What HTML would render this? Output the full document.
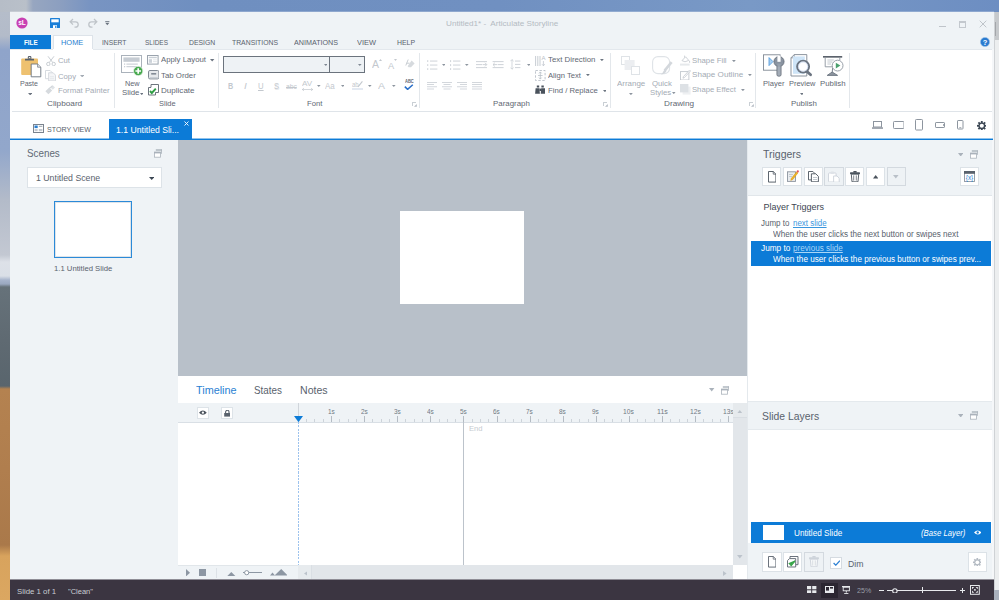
<!DOCTYPE html>
<html><head><meta charset="utf-8"><title>Untitled1* - Articulate Storyline</title>
<style>
*{box-sizing:border-box;margin:0;padding:0}
html,body{width:999px;height:600px;overflow:hidden;background:#7f9dc9;font-family:"Liberation Sans",sans-serif;}
#root{position:absolute;left:0;top:0;width:999px;height:600px;overflow:hidden}
.a{position:absolute}
.t{position:absolute;white-space:nowrap;line-height:1;transform-origin:0 50%}
#win{position:absolute;left:10px;top:12px;width:984px;height:588px;background:#fff;overflow:hidden}
u{text-decoration:underline;text-decoration-thickness:0.7px;text-underline-offset:1px}
</style></head><body>
<div id="root">
<div class="a" style="left:0;top:0;width:999px;height:13px;background:linear-gradient(90deg,#b6bdc7 0,#b9c0c9 26px,#97a6c0 33px,#8c9fc0 60px,#7894c2 90px,#6f8fc0 200px,#7090c1 500px,#7999c6 750px,#6d8ec2 999px)"></div>
<div class="a" style="left:10.00px;top:10.60px;width:984.00px;height:1.40px;background:rgba(255,255,255,0.22);"></div>
<div class="a" style="left:0;top:12px;width:11px;height:588px;background:linear-gradient(180deg,#b5bdca 0px,#b3bbc9 24px,#8fa4ca 38px,#92a7cb 138px,#b3bbc9 188px,#c3c8d2 243px,#dde1e8 250px,#dadfe7 264px,#a7b4cc 268px,#9aa8c0 272px,#66727a 275px,#5f6a72 328px,#59656d 374px,#b48250 377px,#b07e4e 458px,#aa794a 533px,#d8a35d 544px,#dba761 588px)"></div>
<div class="a" style="left:994.00px;top:11.50px;width:5.00px;height:588.50px;background:#eceeef;"></div>
<div class="a" style="left:994.00px;top:11.50px;width:5.00px;height:28.50px;background:#c6c9cc;"></div>
<div class="a" style="left:994.00px;top:22.00px;width:2.00px;height:14.00px;background:#a3a6aa;"></div>
<div class="a" style="left:994.00px;top:590.00px;width:5.00px;height:10.00px;background:#a9b1bd;"></div>
<div class="a" style="left:994.00px;top:11.50px;width:0.60px;height:578.50px;background:#cfd2d5;"></div>
<div id="win">
<div class="a" style="left:0.00px;top:0.00px;width:984.00px;height:37.60px;background:#eff3f6;"></div>
<svg class="a" style="left:6.00px;top:5.20px;" width="12" height="12" viewBox="0 0 12 12"><circle cx="6" cy="6" r="5.6" fill="#c840b3"/><text x="6" y="8.3" font-size="6.5" font-weight="700" fill="#fff" text-anchor="middle" font-family="Liberation Sans, sans-serif">sL</text></svg>
<svg class="a" style="left:40.00px;top:6.20px;" width="10" height="10" viewBox="0 0 10 10"><rect x="0" y="0" width="10" height="10" rx="0.6" fill="#1b7fd8"/><rect x="1.3" y="1.3" width="7.4" height="3" fill="#fff"/><rect x="3" y="7.2" width="4" height="2.8" fill="#fff"/><rect x="5.2" y="7.8" width="1.2" height="2.2" fill="#1b7fd8"/></svg>
<svg class="a" style="left:58.50px;top:5.60px;" width="11" height="10" viewBox="0 0 11 10"><path d="M4 1 L1.2 3.8 L4 6.6 M1.4 3.8 H6.5 A2.7 2.7 0 0 1 6.5 9.2 H5.5" fill="none" stroke="#bfc4c9" stroke-width="1.3"/></svg>
<svg class="a" style="left:77.00px;top:5.60px;" width="11" height="10" viewBox="0 0 11 10"><path d="M7 1 L9.8 3.8 L7 6.6 M9.6 3.8 H4.5 A2.7 2.7 0 0 0 4.5 9.2 H5.5" fill="none" stroke="#bfc4c9" stroke-width="1.3"/></svg>
<svg class="a" style="left:95.00px;top:9.00px;" width="5" height="5" viewBox="0 0 5 5"><rect x="0.2" y="0" width="4.2" height="0.8" fill="#6b7480"/><path d="M0.2 1.8h4.2L2.3 4.2z" fill="#6b7480"/></svg>
<span class="t" style="left:435.80px;top:7.74px;font-size:7.8px;color:#b4bbc3;transform:scaleX(1.0439);">Untitled1* -&nbsp; Articulate Storyline</span>
<div class="a" style="left:929.00px;top:14.00px;width:6.50px;height:1.00px;background:#bfc4ca;"></div>
<div class="a" style="left:949.00px;top:8.50px;width:7.00px;height:7.00px;border:1px solid #c3c8ce;border-top-width:2px;"></div>
<svg class="a" style="left:969.00px;top:8.00px;" width="8" height="8" viewBox="0 0 8 8"><path d="M0.7 0.7L7.3 7.3M7.3 0.7L0.7 7.3" stroke="#bfc4ca" stroke-width="1"/></svg>
<svg class="a" style="left:970.00px;top:24.50px;" width="10" height="10" viewBox="0 0 10 10"><circle cx="5" cy="5" r="4.6" fill="#2a7bd0"/><circle cx="5" cy="5" r="4.6" fill="none" stroke="#9cc3ea" stroke-width="0.6"/><text x="5" y="7.6" font-size="7.5" font-weight="700" fill="#fff" text-anchor="middle" font-family="Liberation Sans, sans-serif">?</text></svg>
<div class="a" style="left:0.00px;top:22.60px;width:40.80px;height:14.80px;background:#0c7bd7;"></div>
<span class="t" style="left:13.80px;top:26.64px;font-size:8px;color:#fff;font-weight:700;transform:scaleX(0.7841);">FILE</span>
<div class="a" style="left:42.60px;top:22.60px;width:40.00px;height:15.00px;background:#fff;border:1px solid #dde3e9;border-bottom:none;"></div>
<span class="t" style="left:51.00px;top:26.64px;font-size:8px;color:#2a7fd0;transform:scaleX(0.9292);">HOME</span>
<span class="t" style="left:91.90px;top:26.64px;font-size:8px;color:#59626d;transform:scaleX(0.8355);">INSERT</span>
<span class="t" style="left:135.00px;top:26.64px;font-size:8px;color:#59626d;transform:scaleX(0.8079);">SLIDES</span>
<span class="t" style="left:178.70px;top:26.64px;font-size:8px;color:#59626d;transform:scaleX(0.8542);">DESIGN</span>
<span class="t" style="left:222.00px;top:26.64px;font-size:8px;color:#59626d;transform:scaleX(0.8553);">TRANSITIONS</span>
<span class="t" style="left:284.00px;top:26.64px;font-size:8px;color:#59626d;transform:scaleX(0.8945);">ANIMATIONS</span>
<span class="t" style="left:347.00px;top:26.64px;font-size:8px;color:#59626d;transform:scaleX(0.9290);">VIEW</span>
<span class="t" style="left:387.00px;top:26.64px;font-size:8px;color:#59626d;transform:scaleX(0.8610);">HELP</span>
<div class="a" style="left:0.00px;top:37.40px;width:982.00px;height:61.60px;background:#fff;"></div>
<div class="a" style="left:982.00px;top:37.40px;width:2.00px;height:530.10px;background:#f5f7f9;"></div>
<div class="a" style="left:0.00px;top:36.80px;width:42.60px;height:0.80px;background:#e3e8ed;"></div>
<div class="a" style="left:82.60px;top:36.80px;width:899.40px;height:0.80px;background:#e3e8ed;"></div>
<div class="a" style="left:2.00px;top:99.00px;width:980.00px;height:1.00px;background:#dfe4e9;"></div>
<div class="a" style="left:104.00px;top:41.00px;width:1.00px;height:55.00px;background:#e3e7eb;"></div>
<div class="a" style="left:208.20px;top:41.00px;width:1.00px;height:55.00px;background:#e3e7eb;"></div>
<div class="a" style="left:408.80px;top:41.00px;width:1.00px;height:55.00px;background:#e3e7eb;"></div>
<div class="a" style="left:599.90px;top:41.00px;width:1.00px;height:55.00px;background:#e3e7eb;"></div>
<div class="a" style="left:745.10px;top:41.00px;width:1.00px;height:55.00px;background:#e3e7eb;"></div>
<div class="a" style="left:838.80px;top:41.00px;width:1.00px;height:55.00px;background:#e3e7eb;"></div>
<svg class="a" style="left:11.00px;top:43.60px;" width="21" height="22" viewBox="0 0 21 22"><rect x="0.2" y="2.4" width="16.8" height="16.5" rx="1" fill="#eec170"/><rect x="4" y="2.8" width="9" height="1.7" fill="#59626d"/><path d="M6.8 2.8V1.4a1.8 1.6 0 0 1 3.6 0V2.8z" fill="#59626d"/><rect x="7.9" y="1.1" width="1.4" height="1" fill="#fff"/><path d="M10.2 8h6.4l3.2 3.2v9.6h-9.6z" fill="#fff" stroke="#6b7480" stroke-width="0.9"/><path d="M16.6 8v3.2h3.2" fill="#dfe3e7" stroke="#6b7480" stroke-width="0.7"/></svg>
<span class="t" style="left:10.40px;top:67.84px;font-size:8px;color:#5f6873;transform:scaleX(0.8794);">Paste</span>
<svg class="a" style="left:17.60px;top:80.90px;" width="4.4" height="2.4" viewBox="0 0 4.4 2.4"><path d="M0 0h4.4L2.2 2.4z" fill="#6b7480"/></svg>
<svg class="a" style="left:35.60px;top:43.60px;" width="10" height="10" viewBox="0 0 10 10"><path d="M2 0.3L6.8 6.6M8 0.3L3.2 6.6" stroke="#c3c8ce" stroke-width="0.9" fill="none"/><circle cx="2.3" cy="8" r="1.7" fill="none" stroke="#c3c8ce" stroke-width="0.9"/><circle cx="7.7" cy="8" r="1.7" fill="none" stroke="#c3c8ce" stroke-width="0.9"/></svg>
<span class="t" style="left:48.00px;top:45.04px;font-size:8px;color:#a4abb4;transform:scaleX(0.9636);">Cut</span>
<svg class="a" style="left:35.20px;top:57.80px;" width="11" height="11.4" viewBox="0 0 11 11.4"><path d="M0.5 0.5h4.6l2.2 2.2v6h-6.8z" fill="#fff" stroke="#d3d7dc" stroke-width="0.9"/><path d="M3.6 2.8h4.6l2.3 2.3v5.8h-6.9z" fill="#f4f5f7" stroke="#d3d7dc" stroke-width="0.9"/><rect x="5" y="6.4" width="4" height="0.8" fill="#dfe3e7"/><rect x="5" y="8.4" width="4" height="0.8" fill="#dfe3e7"/></svg>
<span class="t" style="left:48.00px;top:60.54px;font-size:8px;color:#a4abb4;transform:scaleX(0.9632);">Copy</span>
<svg class="a" style="left:69.80px;top:62.80px;" width="4.4" height="2.4" viewBox="0 0 4.4 2.4"><path d="M0 0h4.4L2.2 2.4z" fill="#a4abb4"/></svg>
<svg class="a" style="left:35.40px;top:72.80px;" width="11" height="10" viewBox="0 0 11 10"><path d="M0.4 6.2L4.2 2.4l3 3L3.4 9.2z" fill="#d6dade"/><path d="M5.6 2.6L8 0.4l2 2L7.8 4.8z" fill="#dfe3e7"/><path d="M4.4 3.4L7.6 0.6" stroke="#d0d5da" stroke-width="1.2"/></svg>
<span class="t" style="left:48.00px;top:74.84px;font-size:8px;color:#a4abb4;transform:scaleX(0.9753);">Format Painter</span>
<span class="t" style="left:37.00px;top:87.84px;font-size:8px;color:#5f6873;transform:scaleX(1.0277);">Clipboard</span>
<svg class="a" style="left:110.60px;top:43.00px;" width="23" height="22" viewBox="0 0 23 22"><rect x="0.5" y="0.5" width="20" height="17" fill="#fff" stroke="#aab2bb" stroke-width="1"/><rect x="2.4" y="2.4" width="16.2" height="4.4" fill="#c6ccd3"/><rect x="5.4" y="8.6" width="11.4" height="1" fill="#c3c9d0"/><rect x="5.4" y="11.2" width="11.4" height="1" fill="#c3c9d0"/><rect x="3" y="8.5" width="1.2" height="1.2" fill="#c3c9d0"/><rect x="3" y="11.1" width="1.2" height="1.2" fill="#c3c9d0"/><circle cx="17.2" cy="16" r="4.7" fill="#48a94f" stroke="#e8f3e9" stroke-width="0.8"/><path d="M17.2 13.2v5.6M14.4 16h5.6" stroke="#fff" stroke-width="1.7"/></svg>
<span class="t" style="left:114.60px;top:67.84px;font-size:8px;color:#5f6873;transform:scaleX(0.9116);">New</span>
<span class="t" style="left:111.80px;top:77.04px;font-size:8px;color:#5f6873;transform:scaleX(0.9777);">Slide</span>
<svg class="a" style="left:129.80px;top:80.55px;" width="3.6" height="2.1" viewBox="0 0 3.6 2.1"><path d="M0 0h3.6L1.8 2.1z" fill="#6b7480"/></svg>
<svg class="a" style="left:137.40px;top:43.20px;" width="12" height="10" viewBox="0 0 12 10"><rect x="0.5" y="0.5" width="10.6" height="8.6" fill="#fff" stroke="#9aa3ad" stroke-width="1"/><rect x="1.8" y="1.8" width="8" height="1.4" fill="#c9cfd6"/><rect x="1.8" y="4.2" width="3.2" height="3.6" fill="#cdd3da"/><rect x="6" y="4.4" width="3.8" height="0.9" fill="#dfe3e7"/><rect x="6" y="6.2" width="3.8" height="0.9" fill="#dfe3e7"/></svg>
<span class="t" style="left:150.80px;top:44.44px;font-size:8px;color:#5f6873;transform:scaleX(0.9726);">Apply Layout</span>
<svg class="a" style="left:200.20px;top:47.20px;" width="4.4" height="2.4" viewBox="0 0 4.4 2.4"><path d="M0 0h4.4L2.2 2.4z" fill="#6b7480"/></svg>
<svg class="a" style="left:137.60px;top:58.20px;" width="11.6" height="9.6" viewBox="0 0 11.6 9.6"><rect x="0.5" y="0.5" width="10.4" height="8.4" rx="1.4" fill="#e6e9ec" stroke="#7f8893" stroke-width="1"/><rect x="1.6" y="7.2" width="8.2" height="1.2" fill="#c3c9d0"/><rect x="3.2" y="3.2" width="5" height="1.3" fill="#6b7480"/></svg>
<span class="t" style="left:150.80px;top:59.84px;font-size:8px;color:#5f6873;transform:scaleX(0.9781);">Tab Order</span>
<svg class="a" style="left:137.80px;top:72.40px;" width="11" height="11.5" viewBox="0 0 11 11.5"><path d="M0.5 3.5h7v7.5h-7z" fill="#fff" stroke="#5d6671" stroke-width="0.9"/><path d="M3 3.3V0.5h7.5v8H7.7" fill="#fff" stroke="#5d6671" stroke-width="0.9"/><path d="M2 7l1.8 2L7.8 4.6" fill="none" stroke="#2f9e44" stroke-width="1.9"/></svg>
<span class="t" style="left:150.80px;top:74.84px;font-size:8px;color:#5f6873;transform:scaleX(1.0072);">Duplicate</span>
<span class="t" style="left:148.80px;top:87.84px;font-size:8px;color:#5f6873;transform:scaleX(0.9327);">Slide</span>
<div class="a" style="left:213.10px;top:44.40px;width:107.20px;height:16.20px;background:#eef2f5;border:1px solid #6b737d;"></div>
<div class="a" style="left:319.30px;top:44.40px;width:35.50px;height:16.20px;background:#eef2f5;border:1px solid #6b737d;"></div>
<svg class="a" style="left:313.60px;top:51.60px;" width="3.6" height="2" viewBox="0 0 3.6 2"><path d="M0 0h3.6L1.8 2z" fill="#7f8893"/></svg>
<svg class="a" style="left:348.20px;top:51.60px;" width="3.6" height="2" viewBox="0 0 3.6 2"><path d="M0 0h3.6L1.8 2z" fill="#7f8893"/></svg>
<span class="t" style="left:362.40px;top:48.26px;font-size:10px;color:#c3c8ce;transform:scaleX(1.0492);">A</span>
<svg class="a" style="left:369.00px;top:46.60px;" width="3" height="2" viewBox="0 0 3 2"><path d="M0 2h3L1.5 0z" fill="#c3c8ce"/></svg>
<span class="t" style="left:378.40px;top:49.55px;font-size:8.6px;color:#c3c8ce;transform:scaleX(1.0812);">A</span>
<svg class="a" style="left:384.40px;top:47.40px;" width="3" height="2" viewBox="0 0 3 2"><path d="M0 0h3L1.5 2z" fill="#c3c8ce"/></svg>
<svg class="a" style="left:394.60px;top:47.40px;" width="10" height="10" viewBox="0 0 10 10"><path d="M3.2 0.5L0.8 6.5M1.6 4.2h3" stroke="#c3c8ce" stroke-width="0.9" fill="none"/><path d="M6.6 1.6l3 3-3.6 3.6h-2.4l-1-1z" fill="#d6dade"/></svg>
<span class="t" style="left:217.60px;top:69.75px;font-size:9px;color:#c3c8ce;font-weight:700;transform:scaleX(0.8000);">B</span>
<span class="t" style="left:234.00px;top:69.75px;font-size:9px;color:#c3c8ce;font-style:italic;transform:scaleX(1.1130);font-family:"Liberation Serif",serif;">I</span>
<span class="t" style="left:248.40px;top:69.75px;font-size:9px;color:#c3c8ce;transform:scaleX(0.8615);"><u>U</u></span>
<span class="t" style="left:264.20px;top:69.75px;font-size:9px;color:#c3c8ce;transform:scaleX(0.8312);text-shadow:0.6px 0.6px 0 #e3e6ea;">S</span>
<span class="t" style="left:276.40px;top:71.13px;font-size:7px;color:#c3c8ce;transform:scaleX(0.9560);"><s>abc</s></span>
<span class="t" style="left:292.40px;top:68.49px;font-size:7.5px;color:#c3c8ce;transform:scaleX(1.0790);">AV</span>
<svg class="a" style="left:292.00px;top:75.60px;" width="11" height="3" viewBox="0 0 11 3"><path d="M0 1.5h11M2 0L0.3 1.5L2 3M9 0l1.7 1.5L9 3" fill="none" stroke="#c3c8ce" stroke-width="0.7"/></svg>
<svg class="a" style="left:307.40px;top:72.60px;" width="3.6" height="2" viewBox="0 0 3.6 2"><path d="M0 0h3.6L1.8 2z" fill="#8d959f"/></svg>
<span class="t" style="left:315.20px;top:70.00px;font-size:8.5px;color:#c3c8ce;transform:scaleX(0.9417);">Aa</span>
<svg class="a" style="left:330.60px;top:72.60px;" width="3.6" height="2" viewBox="0 0 3.6 2"><path d="M0 0h3.6L1.8 2z" fill="#8d959f"/></svg>
<span class="t" style="left:342.00px;top:68.73px;font-size:7px;color:#c3c8ce;transform:scaleX(0.8465);">ab</span>
<svg class="a" style="left:346.40px;top:68.60px;" width="7" height="7" viewBox="0 0 7 7"><path d="M6.4 0.4L2 5.8" stroke="#c3c8ce" stroke-width="1.1"/></svg>
<div class="a" style="left:342.00px;top:76.40px;width:11.00px;height:2.00px;background:#e3e9f2;"></div>
<svg class="a" style="left:358.20px;top:72.60px;" width="3.6" height="2" viewBox="0 0 3.6 2"><path d="M0 0h3.6L1.8 2z" fill="#8d959f"/></svg>
<span class="t" style="left:368.00px;top:69.16px;font-size:9.8px;color:#c3c8ce;transform:scaleX(1.0692);">A</span>
<svg class="a" style="left:382.20px;top:72.60px;" width="3.6" height="2" viewBox="0 0 3.6 2"><path d="M0 0h3.6L1.8 2z" fill="#8d959f"/></svg>
<span class="t" style="left:394.60px;top:67.90px;font-size:4.6px;color:#5d6671;font-weight:700;transform:scaleX(0.8841);">ABC</span>
<svg class="a" style="left:394.20px;top:71.60px;" width="9.6" height="6.6" viewBox="0 0 9.6 6.6"><path d="M0.8 2.6L3.6 5.4L8.8 0.8" fill="none" stroke="#2a6fc9" stroke-width="1.5"/></svg>
<span class="t" style="left:297.00px;top:87.84px;font-size:8px;color:#5f6873;transform:scaleX(0.9616);">Font</span>
<svg class="a" style="left:402.00px;top:90.40px;" width="5" height="5" viewBox="0 0 5 5"><path d="M0.4 4V0.4H4" fill="none" stroke="#b4bbc3" stroke-width="0.8"/><path d="M2 4.8H4.8V2z" fill="#b4bbc3"/></svg>
<svg class="a" style="left:417.00px;top:47.60px;" width="10.6" height="10.4" viewBox="0 0 10.6 10.4"><rect x="0" y="0.4" width="1.3" height="1.3" fill="#c9ced4"/><rect x="3" y="0.6" width="7.4" height="0.9" fill="#c9ced4"/><rect x="0" y="4.4" width="1.3" height="1.3" fill="#c9ced4"/><rect x="3" y="4.6" width="7.4" height="0.9" fill="#c9ced4"/><rect x="0" y="8.4" width="1.3" height="1.3" fill="#c9ced4"/><rect x="3" y="8.6" width="7.4" height="0.9" fill="#c9ced4"/></svg>
<svg class="a" style="left:431.80px;top:51.80px;" width="3.6" height="2" viewBox="0 0 3.6 2"><path d="M0 0h3.6L1.8 2z" fill="#8d959f"/></svg>
<svg class="a" style="left:440.40px;top:47.60px;" width="10.6" height="10.4" viewBox="0 0 10.6 10.4"><rect x="0.2" y="0.1" width="0.9" height="2" fill="#c9ced4"/><rect x="3" y="0.6" width="7.4" height="0.9" fill="#c9ced4"/><rect x="0.2" y="4.1" width="0.9" height="2" fill="#c9ced4"/><rect x="3" y="4.6" width="7.4" height="0.9" fill="#c9ced4"/><rect x="0.2" y="8.1" width="0.9" height="2" fill="#c9ced4"/><rect x="3" y="8.6" width="7.4" height="0.9" fill="#c9ced4"/></svg>
<svg class="a" style="left:455.20px;top:51.80px;" width="3.6" height="2" viewBox="0 0 3.6 2"><path d="M0 0h3.6L1.8 2z" fill="#8d959f"/></svg>
<svg class="a" style="left:466.40px;top:48.60px;" width="11.6" height="8" viewBox="0 0 11.6 8"><rect x="0" y="0.2" width="11" height="0.9" fill="#c9ced4"/><rect x="0" y="3.2" width="6" height="0.9" fill="#c9ced4"/><rect x="0" y="6.2" width="11" height="0.9" fill="#c9ced4"/><path d="M6.6 3.6h4M9 1.8l1.8 1.8L9 5.4" fill="none" stroke="#c9ced4" stroke-width="0.9"/></svg>
<svg class="a" style="left:482.00px;top:48.60px;" width="11.6" height="8" viewBox="0 0 11.6 8"><rect x="0.6" y="0.2" width="11" height="0.9" fill="#c9ced4"/><rect x="5.6" y="3.2" width="6" height="0.9" fill="#c9ced4"/><rect x="0.6" y="6.2" width="11" height="0.9" fill="#c9ced4"/><path d="M1 3.6h4M2.8 1.8L1 3.6l1.8 1.8" fill="none" stroke="#c9ced4" stroke-width="0.9"/></svg>
<svg class="a" style="left:500.40px;top:47.40px;" width="10.6" height="10.8" viewBox="0 0 10.6 10.8"><path d="M2 0.6v9.6M0.4 2.2L2 0.6l1.6 1.6M0.4 8.6L2 10.2l1.6-1.6" fill="none" stroke="#c9ced4" stroke-width="0.8"/><rect x="5" y="1.6" width="5.4" height="0.9" fill="#c9ced4"/><rect x="5" y="4.9" width="5.4" height="0.9" fill="#c9ced4"/><rect x="5" y="8.2" width="5.4" height="0.9" fill="#c9ced4"/></svg>
<svg class="a" style="left:516.60px;top:51.80px;" width="3.6" height="2" viewBox="0 0 3.6 2"><path d="M0 0h3.6L1.8 2z" fill="#8d959f"/></svg>
<svg class="a" style="left:417.00px;top:69.60px;" width="10" height="8.8" viewBox="0 0 10 8.8"><rect x="0" y="0.0" width="10" height="0.8" fill="#c9ced4"/><rect x="0" y="2.2" width="7" height="0.8" fill="#c9ced4"/><rect x="0" y="4.4" width="10" height="0.8" fill="#c9ced4"/><rect x="0" y="6.6000000000000005" width="7" height="0.8" fill="#c9ced4"/></svg>
<svg class="a" style="left:432.00px;top:69.60px;" width="10" height="8.8" viewBox="0 0 10 8.8"><rect x="0.0" y="0.0" width="10" height="0.8" fill="#c9ced4"/><rect x="1.5" y="2.2" width="7" height="0.8" fill="#c9ced4"/><rect x="0.0" y="4.4" width="10" height="0.8" fill="#c9ced4"/><rect x="1.5" y="6.6000000000000005" width="7" height="0.8" fill="#c9ced4"/></svg>
<svg class="a" style="left:447.00px;top:69.60px;" width="10" height="8.8" viewBox="0 0 10 8.8"><rect x="0" y="0.0" width="10" height="0.8" fill="#c9ced4"/><rect x="3" y="2.2" width="7" height="0.8" fill="#c9ced4"/><rect x="0" y="4.4" width="10" height="0.8" fill="#c9ced4"/><rect x="3" y="6.6000000000000005" width="7" height="0.8" fill="#c9ced4"/></svg>
<svg class="a" style="left:462.00px;top:69.60px;" width="10" height="8.8" viewBox="0 0 10 8.8"><rect x="0" y="0.0" width="10" height="0.8" fill="#c9ced4"/><rect x="0" y="2.2" width="10" height="0.8" fill="#c9ced4"/><rect x="0" y="4.4" width="10" height="0.8" fill="#c9ced4"/><rect x="0" y="6.6000000000000005" width="10" height="0.8" fill="#c9ced4"/></svg>
<svg class="a" style="left:525.00px;top:42.60px;" width="11" height="11.4" viewBox="0 0 11 11.4"><path d="M0.6 1v10M2.8 1v10M5 1v10" stroke="#b9c0c8" stroke-width="0.8"/><text x="8.4" y="5" font-size="6" fill="#b9c0c8" text-anchor="middle" font-family="Liberation Sans, sans-serif">A</text><path d="M8.4 6v4.6M7 9.2l1.4 1.6 1.4-1.6" fill="none" stroke="#b9c0c8" stroke-width="0.7"/></svg>
<span class="t" style="left:538.20px;top:44.44px;font-size:8px;color:#5f6873;transform:scaleX(0.9779);">Text Direction</span>
<svg class="a" style="left:590.30px;top:47.10px;" width="3.8" height="2.2" viewBox="0 0 3.8 2.2"><path d="M0 0h3.8L1.9 2.2z" fill="#6b7480"/></svg>
<svg class="a" style="left:525.00px;top:57.60px;" width="10.6" height="11" viewBox="0 0 10.6 11"><rect x="0.5" y="0.5" width="9.6" height="10" fill="none" stroke="#b9c0c8" stroke-width="0.9" stroke-dasharray="2.4 1.6"/><path d="M5.3 2v7M4 3.4l1.3-1.5 1.3 1.5M4 7.6l1.3 1.5 1.3-1.5" fill="none" stroke="#b9c0c8" stroke-width="0.8"/><rect x="3" y="5.1" width="4.6" height="0.8" fill="#b9c0c8"/></svg>
<span class="t" style="left:538.20px;top:59.64px;font-size:8px;color:#5f6873;transform:scaleX(0.9552);">Align Text</span>
<svg class="a" style="left:576.10px;top:62.30px;" width="3.8" height="2.2" viewBox="0 0 3.8 2.2"><path d="M0 0h3.8L1.9 2.2z" fill="#6b7480"/></svg>
<svg class="a" style="left:524.60px;top:73.40px;" width="10.6" height="9" viewBox="0 0 10.6 9"><path d="M1.8 2.6h2.4v-2h-2.4z M6.4 2.6h2.4v-2h-2.4z" fill="#4a525c"/><path d="M0.6 3.2h3.8l0.5 5.6h-4.8z M6.2 3.2h3.8l0.5 5.6h-4.8z" fill="#4a525c"/><rect x="4.4" y="3.6" width="1.8" height="2.4" fill="#4a525c"/></svg>
<span class="t" style="left:538.20px;top:74.84px;font-size:8px;color:#5f6873;transform:scaleX(0.9652);">Find / Replace</span>
<svg class="a" style="left:592.50px;top:77.50px;" width="3.8" height="2.2" viewBox="0 0 3.8 2.2"><path d="M0 0h3.8L1.9 2.2z" fill="#6b7480"/></svg>
<span class="t" style="left:482.60px;top:87.84px;font-size:8px;color:#5f6873;transform:scaleX(0.9850);">Paragraph</span>
<svg class="a" style="left:593.00px;top:90.40px;" width="5" height="5" viewBox="0 0 5 5"><path d="M0.4 4V0.4H4" fill="none" stroke="#b4bbc3" stroke-width="0.8"/><path d="M2 4.8H4.8V2z" fill="#b4bbc3"/></svg>
<svg class="a" style="left:611.00px;top:44.00px;" width="20" height="20" viewBox="0 0 20 20"><rect x="0.5" y="0.5" width="8" height="8" fill="#fff" stroke="#dfe3e7" stroke-width="1"/><rect x="3.6" y="4" width="10" height="10" fill="#eceef1"/><rect x="10.5" y="10.5" width="8" height="8" fill="#fff" stroke="#dfe3e7" stroke-width="1"/></svg>
<span class="t" style="left:607.00px;top:67.84px;font-size:8px;color:#a4abb4;transform:scaleX(0.9906);">Arrange</span>
<svg class="a" style="left:619.10px;top:80.90px;" width="3.8" height="2.2" viewBox="0 0 3.8 2.2"><path d="M0 0h3.8L1.9 2.2z" fill="#8d959f"/></svg>
<svg class="a" style="left:642.00px;top:43.60px;" width="21" height="21" viewBox="0 0 21 21"><rect x="0.6" y="0.6" width="17" height="17" rx="5.4" fill="#fff" stroke="#dfe3e7" stroke-width="1.1"/><path d="M19.6 6.2L12.6 14.6" stroke="#d3d7dc" stroke-width="2.6"/><path d="M12.8 13.4l1.8 1.4c-1.2 2.6-3.4 3.6-5.6 3.6c1.8-1 2-3.6 3.8-5z" fill="#d3d7dc"/></svg>
<span class="t" style="left:642.20px;top:67.84px;font-size:8px;color:#a4abb4;transform:scaleX(0.9681);">Quick</span>
<span class="t" style="left:640.20px;top:77.04px;font-size:8px;color:#a4abb4;transform:scaleX(0.9726);">Styles</span>
<svg class="a" style="left:662.20px;top:80.35px;" width="3.6" height="2.1" viewBox="0 0 3.6 2.1"><path d="M0 0h3.6L1.8 2.1z" fill="#8d959f"/></svg>
<svg class="a" style="left:669.60px;top:42.60px;" width="11.6" height="11" viewBox="0 0 11.6 11"><path d="M2 5.6l3.6-3.8 3.2 3.6-3.8 1.4z" fill="#fff" stroke="#c3c8ce" stroke-width="0.8"/><path d="M4.6 2.6V0.6" stroke="#c3c8ce" stroke-width="0.8"/><path d="M9.6 5.6q1.4 1.6 0 2.4q-1.2-0.8 0-2.4z" fill="#c3c8ce"/><rect x="0" y="8.6" width="9.6" height="2" fill="#e6e9ec"/></svg>
<span class="t" style="left:682.20px;top:45.24px;font-size:8px;color:#a4abb4;transform:scaleX(0.9725);">Shape Fill</span>
<svg class="a" style="left:721.90px;top:47.70px;" width="3.8" height="2.2" viewBox="0 0 3.8 2.2"><path d="M0 0h3.8L1.9 2.2z" fill="#8d959f"/></svg>
<svg class="a" style="left:669.60px;top:57.60px;" width="11.6" height="10.6" viewBox="0 0 11.6 10.6"><rect x="0.5" y="1.6" width="8.4" height="8.4" fill="#fff" stroke="#c3c8ce" stroke-width="0.9"/><path d="M10.6 0.8L4.4 7.6l-1.4 0.6 0.4-1.6L9.6 0z" fill="#fff" stroke="#c3c8ce" stroke-width="0.8"/></svg>
<span class="t" style="left:682.20px;top:59.44px;font-size:8px;color:#a4abb4;transform:scaleX(1.0098);">Shape Outline</span>
<svg class="a" style="left:738.30px;top:62.10px;" width="3.8" height="2.2" viewBox="0 0 3.8 2.2"><path d="M0 0h3.8L1.9 2.2z" fill="#8d959f"/></svg>
<svg class="a" style="left:669.60px;top:72.00px;" width="11" height="10.6" viewBox="0 0 11 10.6"><rect x="2.6" y="2.6" width="8" height="8" fill="#eef0f2"/><rect x="0" y="0" width="8.4" height="8.4" fill="#dde1e5"/></svg>
<span class="t" style="left:682.20px;top:74.24px;font-size:8px;color:#a4abb4;transform:scaleX(0.9590);">Shape Effect</span>
<svg class="a" style="left:731.10px;top:76.90px;" width="3.8" height="2.2" viewBox="0 0 3.8 2.2"><path d="M0 0h3.8L1.9 2.2z" fill="#8d959f"/></svg>
<span class="t" style="left:654.20px;top:87.84px;font-size:8px;color:#5f6873;transform:scaleX(1.0224);">Drawing</span>
<svg class="a" style="left:738.60px;top:90.40px;" width="5" height="5" viewBox="0 0 5 5"><path d="M0.4 4V0.4H4" fill="none" stroke="#b4bbc3" stroke-width="0.8"/><path d="M2 4.8H4.8V2z" fill="#b4bbc3"/></svg>
<svg class="a" style="left:753.00px;top:42.00px;" width="22" height="23" viewBox="0 0 22 23"><rect x="0.5" y="0.8" width="16.6" height="15.4" fill="#fff" stroke="#7f8893" stroke-width="0.9"/><path d="M6 3.6v8l4-4z" fill="#a9d0f0" stroke="#4a96dc" stroke-width="0.8"/><circle cx="16" cy="7.6" r="5.1" fill="#8993a0" stroke="#59626d" stroke-width="0.7"/><rect x="14.4" y="1.8" width="3.2" height="6" fill="#fff"/><rect x="13.9" y="11.4" width="4.2" height="10.8" rx="1.6" fill="#a3acb7" stroke="#59626d" stroke-width="0.7"/><rect x="14.3" y="9.6" width="3.4" height="3" fill="#97a1ad"/></svg>
<span class="t" style="left:753.20px;top:67.84px;font-size:8px;color:#5f6873;transform:scaleX(0.9433);">Player</span>
<svg class="a" style="left:780.00px;top:42.00px;" width="23" height="23" viewBox="0 0 23 23"><path d="M4.2 0.6h12.6v21.4h-15.8v-18.2z" fill="#fff" stroke="#7f8893" stroke-width="0.9"/><path d="M1 3.8h3.2v-3.2" fill="none" stroke="#7f8893" stroke-width="0.8"/><rect x="3" y="2.4" width="11.8" height="17.4" fill="#cfe5f8"/><path d="M17 17.4l3.6 3.4" stroke="#6b7480" stroke-width="2.8" stroke-linecap="round"/><circle cx="13.1" cy="12.6" r="6" fill="#fff" stroke="#6b7480" stroke-width="1.9"/><circle cx="13.1" cy="12.6" r="4.7" fill="none" stroke="#b5c8e6" stroke-width="0.6"/></svg>
<span class="t" style="left:779.40px;top:67.84px;font-size:8px;color:#5f6873;transform:scaleX(0.9278);">Preview</span>
<svg class="a" style="left:789.70px;top:80.90px;" width="3.8" height="2.2" viewBox="0 0 3.8 2.2"><path d="M0 0h3.8L1.9 2.2z" fill="#6b7480"/></svg>
<svg class="a" style="left:812.00px;top:43.00px;" width="23" height="22" viewBox="0 0 23 22"><rect x="1" y="1.1" width="19.2" height="1.5" fill="#4a525c"/><path d="M3.2 2.6v9.2h7M17.8 2.6v2.6" fill="none" stroke="#8d959f" stroke-width="0.9"/><rect x="5.4" y="4.6" width="6.4" height="0.8" fill="#b4bbc3"/><rect x="5.4" y="6.6" width="5" height="0.8" fill="#b4bbc3"/><rect x="5.4" y="8.6" width="3.6" height="0.8" fill="#b4bbc3"/><path d="M10.6 13l-0.4 4.6M5.2 20.4l5-3.4 5.4 3.4z" stroke="#6b7480" stroke-width="0.9" fill="#8d959f"/><circle cx="15.6" cy="10.6" r="5.4" fill="#fff" stroke="#8d959f" stroke-width="0.9"/><path d="M13.8 7.8v5.6l4.6-2.8z" fill="#4aa06e"/></svg>
<span class="t" style="left:810.40px;top:67.84px;font-size:8px;color:#5f6873;transform:scaleX(0.9752);">Publish</span>
<span class="t" style="left:781.20px;top:87.84px;font-size:8px;color:#5f6873;transform:scaleX(0.9829);">Publish</span>
<div class="a" style="left:0.00px;top:100.00px;width:982.00px;height:26.00px;background:#fff;"></div>
<div class="a" style="left:0.00px;top:127.00px;width:983.40px;height:1.00px;background:#0c7bd7;"></div>
<div class="a" style="left:0.00px;top:126.00px;width:983.40px;height:1.00px;background:#8fc2ec;"></div>
<div class="a" style="left:99.00px;top:107.00px;width:82.60px;height:20.00px;background:#0c7bd7;"></div>
<span class="t" style="left:37.00px;top:113.84px;font-size:8px;color:#555e69;transform:scaleX(0.8836);">STORY VIEW</span>
<span class="t" style="left:106.00px;top:113.55px;font-size:9px;color:#fff;transform:scaleX(0.9614);">1.1 Untitled Sli...</span>
<svg class="a" style="left:173.50px;top:108.50px;" width="5" height="5" viewBox="0 0 5 5"><path d="M0.5 0.5L4.5 4.5M4.5 0.5L0.5 4.5" stroke="#fff" stroke-width="0.9"/></svg>
<svg class="a" style="left:23.00px;top:112.00px;" width="11" height="9" viewBox="0 0 11 9"><rect x="0.5" y="0.5" width="10" height="8" fill="#fff" stroke="#7a838e" stroke-width="1"/><rect x="1.5" y="1.5" width="3.2" height="2.6" fill="#2a7fd0"/><rect x="5.8" y="1.8" width="3.6" height="1" fill="#9aa3ad"/><rect x="1.6" y="5" width="3" height="2.2" fill="#c3c9d0"/><rect x="5.8" y="5" width="3.6" height="2.2" fill="#c3c9d0"/></svg>
<svg class="a" style="left:862.00px;top:109.00px;" width="11" height="8" viewBox="0 0 11 8"><rect x="1.5" y="0.5" width="8" height="5.5" fill="#fff" stroke="#8d959f" stroke-width="1"/><rect x="0" y="6.3" width="11" height="1.5" fill="#8d959f"/></svg>
<svg class="a" style="left:882.50px;top:109.00px;" width="11.5" height="8" viewBox="0 0 11.5 8"><rect x="0.5" y="0.5" width="10.5" height="7" rx="0.8" fill="#fff" stroke="#8d959f" stroke-width="1"/></svg>
<svg class="a" style="left:905.00px;top:107.00px;" width="8" height="11.5" viewBox="0 0 8 11.5"><rect x="0.5" y="0.5" width="7" height="10.5" rx="0.8" fill="#fff" stroke="#8d959f" stroke-width="1"/></svg>
<svg class="a" style="left:924.80px;top:110.00px;" width="10" height="6" viewBox="0 0 10 6"><rect x="0.5" y="0.5" width="9" height="5" rx="0.6" fill="#fff" stroke="#8d959f" stroke-width="1"/><rect x="8" y="2" width="0.8" height="2" fill="#8d959f"/></svg>
<svg class="a" style="left:947.00px;top:108.00px;" width="6.5" height="9.5" viewBox="0 0 6.5 9.5"><rect x="0.5" y="0.5" width="5.5" height="8.5" rx="0.6" fill="#fff" stroke="#8d959f" stroke-width="1"/><rect x="2.3" y="7.3" width="2" height="0.8" fill="#8d959f"/></svg>
<svg class="a" style="left:966.80px;top:108.80px;" width="9.6" height="9.6" viewBox="0 0 10 10"><g transform="translate(5 5)"><rect x="-0.95" y="-5" width="1.9" height="10" fill="#3b4653" transform="rotate(0)"/><rect x="-0.95" y="-5" width="1.9" height="10" fill="#3b4653" transform="rotate(45)"/><rect x="-0.95" y="-5" width="1.9" height="10" fill="#3b4653" transform="rotate(90)"/><rect x="-0.95" y="-5" width="1.9" height="10" fill="#3b4653" transform="rotate(135)"/><circle r="3.5" fill="#3b4653"/><circle r="2.15" fill="#fff"/></g></svg>
<div class="a" style="left:0.00px;top:128.00px;width:167.50px;height:439.50px;background:#eff3f6;"></div>
<span class="t" style="left:16.50px;top:136.38px;font-size:11px;color:#606974;transform:scaleX(0.8937);">Scenes</span>
<svg class="a" style="left:144.20px;top:137.30px;" width="8" height="9" viewBox="0 0 8 9"><rect x="1.8" y="0.3" width="6" height="1.4" fill="#aab2bb"/><rect x="7" y="0.3" width="0.8" height="4.5" fill="#aab2bb"/><rect x="0.4" y="3.2" width="6" height="5" fill="#fff" stroke="#aab2bb" stroke-width="0.8"/><rect x="0" y="2.8" width="6.8" height="1.6" fill="#aab2bb"/></svg>
<div class="a" style="left:16.50px;top:155.20px;width:135.30px;height:20.40px;background:#fff;border:1px solid #dde3e8;"></div>
<span class="t" style="left:25.80px;top:161.95px;font-size:9px;color:#59626d;transform:scaleX(0.9720);">1 Untitled Scene</span>
<svg class="a" style="left:138.60px;top:164.60px;" width="5.4" height="3" viewBox="0 0 5.4 3"><path d="M0 0h5.4L2.7 3z" fill="#3b4653"/></svg>
<div class="a" style="left:44.00px;top:188.80px;width:78.30px;height:57.20px;background:#fff;border:1px solid #2b8ad8;box-shadow:inset 0 0 0 1px #dfe4e9;"></div>
<span class="t" style="left:43.80px;top:253.04px;font-size:8px;color:#59626d;transform:scaleX(0.9622);">1.1 Untitled Slide</span>
<div class="a" style="left:167.50px;top:128.00px;width:569.80px;height:235.60px;background:#b8c0c9;"></div>
<div class="a" style="left:390.00px;top:198.80px;width:124.40px;height:93.20px;background:#fff;"></div>
<div class="a" style="left:167.50px;top:363.60px;width:569.80px;height:203.90px;background:#fff;"></div>
<span class="t" style="left:186.10px;top:372.88px;font-size:11px;color:#2a7fd3;transform:scaleX(0.9861);">Timeline</span>
<span class="t" style="left:244.10px;top:372.88px;font-size:11px;color:#59626d;transform:scaleX(0.8946);">States</span>
<span class="t" style="left:289.70px;top:372.88px;font-size:11px;color:#59626d;transform:scaleX(0.9600);">Notes</span>
<svg class="a" style="left:699.40px;top:376.00px;" width="5.4" height="3.6" viewBox="0 0 5.4 3.6"><path d="M0 0h5.4L2.7 3.6z" fill="#aab2bb"/></svg>
<svg class="a" style="left:711.30px;top:373.60px;" width="8" height="9" viewBox="0 0 8 9"><rect x="1.8" y="0.3" width="6" height="1.4" fill="#aab2bb"/><rect x="7" y="0.3" width="0.8" height="4.5" fill="#aab2bb"/><rect x="0.4" y="3.2" width="6" height="5" fill="#fff" stroke="#aab2bb" stroke-width="0.8"/><rect x="0" y="2.8" width="6.8" height="1.6" fill="#aab2bb"/></svg>
<div class="a" style="left:167.50px;top:391.00px;width:555.80px;height:20.00px;background:#eff3f6;border-bottom:1px solid #d9dfe5;"></div>
<div class="a" style="left:186.50px;top:395.30px;width:12.20px;height:12.10px;background:#fff;border:1px solid #dde3e8;"></div>
<svg class="a" style="left:188.80px;top:398.40px;" width="7.8" height="5.4" viewBox="0 0 7.8 5.4"><path d="M0 2.7Q3.9 -1.6 7.8 2.7Q3.9 7 0 2.7z" fill="#4a525c"/><circle cx="3.9" cy="2.7" r="1.15" fill="#fff"/></svg>
<div class="a" style="left:211.00px;top:395.30px;width:12.00px;height:12.10px;background:#fff;border:1px solid #dde3e8;"></div>
<svg class="a" style="left:213.80px;top:397.80px;" width="6.6" height="7" viewBox="0 0 6.6 7"><path d="M1.6 3V2a1.7 1.7 0 0 1 3.4 0V3" fill="none" stroke="#59626d" stroke-width="1.1"/><rect x="0.2" y="3" width="6.2" height="3.6" fill="#59626d"/></svg>
<div class="a" style="left:296.17px;top:407.00px;width:1.00px;height:3.00px;background:#cdd3d9;"></div>
<div class="a" style="left:304.45px;top:407.00px;width:1.00px;height:3.00px;background:#cdd3d9;"></div>
<div class="a" style="left:312.72px;top:407.00px;width:1.00px;height:3.00px;background:#cdd3d9;"></div>
<div class="a" style="left:321.00px;top:404.40px;width:1.00px;height:5.60px;background:#b4bbc3;"></div>
<div class="a" style="left:329.27px;top:407.00px;width:1.00px;height:3.00px;background:#cdd3d9;"></div>
<div class="a" style="left:337.55px;top:407.00px;width:1.00px;height:3.00px;background:#cdd3d9;"></div>
<div class="a" style="left:345.82px;top:407.00px;width:1.00px;height:3.00px;background:#cdd3d9;"></div>
<div class="a" style="left:354.10px;top:404.40px;width:1.00px;height:5.60px;background:#b4bbc3;"></div>
<div class="a" style="left:362.38px;top:407.00px;width:1.00px;height:3.00px;background:#cdd3d9;"></div>
<div class="a" style="left:370.65px;top:407.00px;width:1.00px;height:3.00px;background:#cdd3d9;"></div>
<div class="a" style="left:378.92px;top:407.00px;width:1.00px;height:3.00px;background:#cdd3d9;"></div>
<div class="a" style="left:387.20px;top:404.40px;width:1.00px;height:5.60px;background:#b4bbc3;"></div>
<div class="a" style="left:395.47px;top:407.00px;width:1.00px;height:3.00px;background:#cdd3d9;"></div>
<div class="a" style="left:403.75px;top:407.00px;width:1.00px;height:3.00px;background:#cdd3d9;"></div>
<div class="a" style="left:412.02px;top:407.00px;width:1.00px;height:3.00px;background:#cdd3d9;"></div>
<div class="a" style="left:420.30px;top:404.40px;width:1.00px;height:5.60px;background:#b4bbc3;"></div>
<div class="a" style="left:428.57px;top:407.00px;width:1.00px;height:3.00px;background:#cdd3d9;"></div>
<div class="a" style="left:436.85px;top:407.00px;width:1.00px;height:3.00px;background:#cdd3d9;"></div>
<div class="a" style="left:445.12px;top:407.00px;width:1.00px;height:3.00px;background:#cdd3d9;"></div>
<div class="a" style="left:453.40px;top:404.40px;width:1.00px;height:5.60px;background:#b4bbc3;"></div>
<div class="a" style="left:461.67px;top:407.00px;width:1.00px;height:3.00px;background:#cdd3d9;"></div>
<div class="a" style="left:469.95px;top:407.00px;width:1.00px;height:3.00px;background:#cdd3d9;"></div>
<div class="a" style="left:478.23px;top:407.00px;width:1.00px;height:3.00px;background:#cdd3d9;"></div>
<div class="a" style="left:486.50px;top:404.40px;width:1.00px;height:5.60px;background:#b4bbc3;"></div>
<div class="a" style="left:494.77px;top:407.00px;width:1.00px;height:3.00px;background:#cdd3d9;"></div>
<div class="a" style="left:503.05px;top:407.00px;width:1.00px;height:3.00px;background:#cdd3d9;"></div>
<div class="a" style="left:511.33px;top:407.00px;width:1.00px;height:3.00px;background:#cdd3d9;"></div>
<div class="a" style="left:519.60px;top:404.40px;width:1.00px;height:5.60px;background:#b4bbc3;"></div>
<div class="a" style="left:527.88px;top:407.00px;width:1.00px;height:3.00px;background:#cdd3d9;"></div>
<div class="a" style="left:536.15px;top:407.00px;width:1.00px;height:3.00px;background:#cdd3d9;"></div>
<div class="a" style="left:544.42px;top:407.00px;width:1.00px;height:3.00px;background:#cdd3d9;"></div>
<div class="a" style="left:552.70px;top:404.40px;width:1.00px;height:5.60px;background:#b4bbc3;"></div>
<div class="a" style="left:560.97px;top:407.00px;width:1.00px;height:3.00px;background:#cdd3d9;"></div>
<div class="a" style="left:569.25px;top:407.00px;width:1.00px;height:3.00px;background:#cdd3d9;"></div>
<div class="a" style="left:577.52px;top:407.00px;width:1.00px;height:3.00px;background:#cdd3d9;"></div>
<div class="a" style="left:585.80px;top:404.40px;width:1.00px;height:5.60px;background:#b4bbc3;"></div>
<div class="a" style="left:594.08px;top:407.00px;width:1.00px;height:3.00px;background:#cdd3d9;"></div>
<div class="a" style="left:602.35px;top:407.00px;width:1.00px;height:3.00px;background:#cdd3d9;"></div>
<div class="a" style="left:610.62px;top:407.00px;width:1.00px;height:3.00px;background:#cdd3d9;"></div>
<div class="a" style="left:618.90px;top:404.40px;width:1.00px;height:5.60px;background:#b4bbc3;"></div>
<div class="a" style="left:627.17px;top:407.00px;width:1.00px;height:3.00px;background:#cdd3d9;"></div>
<div class="a" style="left:635.45px;top:407.00px;width:1.00px;height:3.00px;background:#cdd3d9;"></div>
<div class="a" style="left:643.72px;top:407.00px;width:1.00px;height:3.00px;background:#cdd3d9;"></div>
<div class="a" style="left:652.00px;top:404.40px;width:1.00px;height:5.60px;background:#b4bbc3;"></div>
<div class="a" style="left:660.27px;top:407.00px;width:1.00px;height:3.00px;background:#cdd3d9;"></div>
<div class="a" style="left:668.55px;top:407.00px;width:1.00px;height:3.00px;background:#cdd3d9;"></div>
<div class="a" style="left:676.83px;top:407.00px;width:1.00px;height:3.00px;background:#cdd3d9;"></div>
<div class="a" style="left:685.10px;top:404.40px;width:1.00px;height:5.60px;background:#b4bbc3;"></div>
<div class="a" style="left:693.38px;top:407.00px;width:1.00px;height:3.00px;background:#cdd3d9;"></div>
<div class="a" style="left:701.65px;top:407.00px;width:1.00px;height:3.00px;background:#cdd3d9;"></div>
<div class="a" style="left:709.92px;top:407.00px;width:1.00px;height:3.00px;background:#cdd3d9;"></div>
<div class="a" style="left:718.20px;top:404.40px;width:1.00px;height:5.60px;background:#b4bbc3;"></div>
<span class="t" style="left:317.50px;top:396.44px;font-size:8px;color:#6f7883;transform:scaleX(0.8044);">1s</span>
<span class="t" style="left:350.60px;top:396.44px;font-size:8px;color:#6f7883;transform:scaleX(0.8044);">2s</span>
<span class="t" style="left:383.70px;top:396.44px;font-size:8px;color:#6f7883;transform:scaleX(0.8044);">3s</span>
<span class="t" style="left:416.80px;top:396.44px;font-size:8px;color:#6f7883;transform:scaleX(0.8044);">4s</span>
<span class="t" style="left:449.90px;top:396.44px;font-size:8px;color:#6f7883;transform:scaleX(0.8044);">5s</span>
<span class="t" style="left:483.00px;top:396.44px;font-size:8px;color:#6f7883;transform:scaleX(0.8044);">6s</span>
<span class="t" style="left:516.10px;top:396.44px;font-size:8px;color:#6f7883;transform:scaleX(0.8044);">7s</span>
<span class="t" style="left:549.20px;top:396.44px;font-size:8px;color:#6f7883;transform:scaleX(0.8044);">8s</span>
<span class="t" style="left:582.30px;top:396.44px;font-size:8px;color:#6f7883;transform:scaleX(0.8044);">9s</span>
<span class="t" style="left:613.40px;top:396.44px;font-size:8px;color:#6f7883;transform:scaleX(0.8368);">10s</span>
<span class="t" style="left:646.50px;top:396.44px;font-size:8px;color:#6f7883;transform:scaleX(0.8772);">11s</span>
<span class="t" style="left:679.60px;top:396.44px;font-size:8px;color:#6f7883;transform:scaleX(0.8368);">12s</span>
<span class="t" style="left:712.70px;top:396.44px;font-size:8px;color:#6f7883;transform:scaleX(0.8368);">13s</span>
<div class="a" style="left:288.00px;top:391.00px;width:1.00px;height:13.00px;background:#d0d5db;"></div>
<svg class="a" style="left:283.90px;top:403.60px;" width="9" height="6.2" viewBox="0 0 9 6.2"><path d="M0 0h9L4.5 6.2z" fill="#0c7bd7"/></svg>
<div class="a" style="left:288px;top:409.8px;width:1px;height:143.5px;background:repeating-linear-gradient(180deg,#9dc3ee 0,#9dc3ee 2.2px,#fff 2.2px,#fff 3.3px)"></div>
<div class="a" style="left:453.00px;top:410.30px;width:1.00px;height:143.00px;background:#bcc3cb;"></div>
<span class="t" style="left:458.60px;top:412.64px;font-size:8px;color:#c6cbd1;transform:scaleX(0.9554);">End</span>
<div class="a" style="left:723.30px;top:391.00px;width:14.00px;height:162.30px;background:#e2e6ea;"></div>
<div class="a" style="left:723.30px;top:391.00px;width:14.00px;height:15.00px;background:#e6eaed;border-bottom:1px solid #d9dee3;"></div>
<svg class="a" style="left:727.40px;top:397.50px;" width="5.6" height="3.6" viewBox="0 0 5.6 3.6"><path d="M0 3.6h5.6L2.8 0z" fill="#bcc3cb"/></svg>
<svg class="a" style="left:727.40px;top:543.00px;" width="5.6" height="3.6" viewBox="0 0 5.6 3.6"><path d="M0 0h5.6L2.8 3.6z" fill="#bcc3cb"/></svg>
<div class="a" style="left:167.50px;top:553.30px;width:120.80px;height:14.20px;background:#eff3f6;border-top:1px solid #e1e6ea;"></div>
<div class="a" style="left:288.30px;top:553.30px;width:435.00px;height:14.20px;background:#e2e6ea;"></div>
<div class="a" style="left:288.30px;top:553.30px;width:13.70px;height:14.20px;background:#e7ebee;border-right:1px solid #dadfe4;"></div>
<svg class="a" style="left:293.50px;top:558.50px;" width="3.6" height="5" viewBox="0 0 3.6 5"><path d="M3.6 0v5L0 2.5z" fill="#bcc3cb"/></svg>
<svg class="a" style="left:713.00px;top:558.50px;" width="3.6" height="5" viewBox="0 0 3.6 5"><path d="M0 0v5L3.6 2.5z" fill="#bcc3cb"/></svg>
<svg class="a" style="left:175.90px;top:556.60px;" width="4" height="7.4" viewBox="0 0 4 7.4"><path d="M0 0v7.4L4 3.7z" fill="#8d97a3"/></svg>
<div class="a" style="left:189.40px;top:557.30px;width:7.00px;height:6.60px;background:#8d97a3;"></div>
<div class="a" style="left:206.00px;top:556.00px;width:1.00px;height:9.50px;background:#dde2e7;"></div>
<svg class="a" style="left:217.30px;top:559.60px;" width="8.6" height="4.3" viewBox="0 0 8.6 4.3"><path d="M0 4.3h8.6L4.3 0z" fill="#8d97a3"/></svg>
<div class="a" style="left:233.00px;top:560.40px;width:19.00px;height:1.00px;background:#8d97a3;"></div>
<svg class="a" style="left:234.40px;top:558.20px;" width="5.4" height="5.4" viewBox="0 0 5.4 5.4"><circle cx="2.7" cy="2.7" r="2.1" fill="#fff" stroke="#8d97a3" stroke-width="1"/></svg>
<svg class="a" style="left:259.50px;top:557.40px;" width="17.8" height="6.5" viewBox="0 0 17.8 6.5"><path d="M0 6.5h5L2.5 3.6z M4.5 6.5h13.3L11.2 0z" fill="#8d97a3"/></svg>
<div class="a" style="left:737.30px;top:128.00px;width:244.70px;height:439.50px;background:#fff;border-left:1px solid #e4e9ed;"></div>
<div class="a" style="left:738.30px;top:128.00px;width:243.70px;height:55.80px;background:#eff3f6;border-bottom:1px solid #e1e6ea;"></div>
<span class="t" style="left:752.80px;top:137.48px;font-size:11px;color:#59626d;transform:scaleX(0.9540);">Triggers</span>
<svg class="a" style="left:947.50px;top:140.60px;" width="5.4" height="3.6" viewBox="0 0 5.4 3.6"><path d="M0 0h5.4L2.7 3.6z" fill="#aab2bb"/></svg>
<svg class="a" style="left:960.00px;top:137.50px;" width="8" height="9" viewBox="0 0 8 9"><rect x="1.8" y="0.3" width="6" height="1.4" fill="#aab2bb"/><rect x="7" y="0.3" width="0.8" height="4.5" fill="#aab2bb"/><rect x="0.4" y="3.2" width="6" height="5" fill="#fff" stroke="#aab2bb" stroke-width="0.8"/><rect x="0" y="2.8" width="6.8" height="1.6" fill="#aab2bb"/></svg>
<div class="a" style="left:752.10px;top:155.30px;width:19.20px;height:18.30px;background:#fff;border:1px solid #dce2e7;"></div>
<div class="a" style="left:773.00px;top:155.30px;width:19.20px;height:18.30px;background:#fff;border:1px solid #dce2e7;"></div>
<div class="a" style="left:793.80px;top:155.30px;width:19.20px;height:18.30px;background:#fff;border:1px solid #dce2e7;"></div>
<div class="a" style="left:814.40px;top:155.30px;width:19.20px;height:18.30px;background:#eef2f5;border:1px solid #d3d9df;"></div>
<div class="a" style="left:835.20px;top:155.30px;width:19.20px;height:18.30px;background:#fff;border:1px solid #dce2e7;"></div>
<div class="a" style="left:856.00px;top:155.30px;width:19.20px;height:18.30px;background:#fff;border:1px solid #dce2e7;"></div>
<div class="a" style="left:876.70px;top:155.30px;width:19.20px;height:18.30px;background:#eef2f5;border:1px solid #d3d9df;"></div>
<div class="a" style="left:949.50px;top:155.30px;width:19.10px;height:18.30px;background:#fff;border:1px solid #dce2e7;"></div>
<span class="t" style="left:753.50px;top:190.95px;font-size:9px;color:#3d4652;">Player Triggers</span>
<span class="t" style="left:751.20px;top:207.20px;font-size:8.5px;color:#59626d;transform:scaleX(0.9388);">Jump to</span>
<span class="t" style="left:783.40px;top:207.20px;font-size:8.5px;color:#3a96de;transform:scaleX(0.9354);"><u>next slide</u></span>
<span class="t" style="left:762.80px;top:217.90px;font-size:8.5px;color:#59626d;transform:scaleX(0.9571);">When the user clicks the next button or swipes next</span>
<div class="a" style="left:740.70px;top:229.00px;width:240.00px;height:25.00px;background:#0c7bd7;"></div>
<span class="t" style="left:750.80px;top:232.10px;font-size:8.5px;color:#fff;transform:scaleX(0.9719);">Jump to</span>
<span class="t" style="left:783.20px;top:232.10px;font-size:8.5px;color:#a9d6f7;transform:scaleX(0.9580);"><u>previous slide</u></span>
<span class="t" style="left:762.80px;top:243.40px;font-size:8.5px;color:#fff;transform:scaleX(0.9603);">When the user clicks the previous button or swipes prev...</span>
<div class="a" style="left:738.30px;top:389.40px;width:243.70px;height:28.60px;background:#eff3f6;border-top:1px solid #e4e9ed;border-bottom:1px solid #e4e9ed;"></div>
<span class="t" style="left:752.40px;top:398.58px;font-size:11px;color:#59626d;transform:scaleX(0.9431);">Slide Layers</span>
<svg class="a" style="left:947.50px;top:401.60px;" width="5.4" height="3.6" viewBox="0 0 5.4 3.6"><path d="M0 0h5.4L2.7 3.6z" fill="#aab2bb"/></svg>
<svg class="a" style="left:960.00px;top:398.60px;" width="8" height="9" viewBox="0 0 8 9"><rect x="1.8" y="0.3" width="6" height="1.4" fill="#aab2bb"/><rect x="7" y="0.3" width="0.8" height="4.5" fill="#aab2bb"/><rect x="0.4" y="3.2" width="6" height="5" fill="#fff" stroke="#aab2bb" stroke-width="0.8"/><rect x="0" y="2.8" width="6.8" height="1.6" fill="#aab2bb"/></svg>
<div class="a" style="left:741.20px;top:510.00px;width:239.40px;height:21.00px;background:#0c7bd7;"></div>
<div class="a" style="left:752.80px;top:512.80px;width:21.30px;height:15.00px;background:#fff;"></div>
<span class="t" style="left:783.60px;top:516.90px;font-size:8.5px;color:#fff;transform:scaleX(0.9642);">Untitled Slide</span>
<span class="t" style="left:910.60px;top:516.90px;font-size:8.5px;color:#fff;font-style:italic;transform:scaleX(0.9122);">(Base Layer)</span>
<svg class="a" style="left:963.50px;top:518.00px;" width="7.4" height="5" viewBox="0 0 7.4 5"><path d="M0 2.5Q3.7 -1.4 7.4 2.5Q3.7 6.4 0 2.5z" fill="#fff"/><circle cx="3.7" cy="2.5" r="1.2" fill="#0c7bd7"/></svg>
<div class="a" style="left:738.30px;top:531.00px;width:243.70px;height:36.50px;background:#eff3f6;"></div>
<div class="a" style="left:752.00px;top:540.40px;width:19.70px;height:19.40px;background:#fff;border:1px solid #dce2e7;"></div>
<div class="a" style="left:773.00px;top:540.40px;width:19.40px;height:19.40px;background:#fff;border:1px solid #dce2e7;"></div>
<div class="a" style="left:794.00px;top:540.40px;width:19.70px;height:19.40px;background:#eef2f5;border:1px solid #d3d9df;"></div>
<div class="a" style="left:820.30px;top:545.00px;width:11.90px;height:11.60px;background:#fff;border:1px solid #d5dbe1;"></div>
<svg class="a" style="left:822.60px;top:547.60px;" width="7.4" height="6" viewBox="0 0 7.4 6"><path d="M0.6 3L2.8 5.2L6.9 0.7" fill="none" stroke="#2a7fd3" stroke-width="1.2"/></svg>
<span class="t" style="left:837.80px;top:547.60px;font-size:8.5px;color:#59626d;transform:scaleX(1.0192);">Dim</span>
<div class="a" style="left:957.60px;top:540.40px;width:19.40px;height:19.40px;background:#fff;border:1px solid #dce2e7;"></div>
<div class="a" style="left:738.30px;top:566.50px;width:243.70px;height:1.00px;background:#dde2e7;"></div>
<svg class="a" style="left:962.90px;top:545.80px;" width="8.6" height="8.6" viewBox="0 0 10 10"><g transform="translate(5 5)"><rect x="-0.95" y="-5" width="1.9" height="10" fill="#b4bbc3" transform="rotate(0)"/><rect x="-0.95" y="-5" width="1.9" height="10" fill="#b4bbc3" transform="rotate(45)"/><rect x="-0.95" y="-5" width="1.9" height="10" fill="#b4bbc3" transform="rotate(90)"/><rect x="-0.95" y="-5" width="1.9" height="10" fill="#b4bbc3" transform="rotate(135)"/><circle r="3.5" fill="#b4bbc3"/><circle r="2.15" fill="#fff"/></g></svg>
<svg class="a" style="left:758.00px;top:159.00px;" width="8.4" height="11.6" viewBox="0 0 8.4 11.6"><path d="M0.5 0.5h4.736000000000001l2.664 2.664v7.936h-7.4z" fill="#fff" stroke="#4a525c" stroke-width="0.9"/><path d="M5.236000000000001 0.5v2.664h2.664" fill="none" stroke="#4a525c" stroke-width="0.7200000000000001"/></svg>
<svg class="a" style="left:777.00px;top:158.00px;" width="12" height="12" viewBox="0 0 12 12"><rect x="0.5" y="1.8" width="8" height="9.6" fill="#e9ecef" stroke="#8d959f" stroke-width="0.9"/><rect x="2" y="4" width="4" height="0.7" fill="#b4bbc3"/><rect x="2" y="6" width="3" height="0.7" fill="#b4bbc3"/><path d="M4.2 8.6L9.6 1.8l1.4 1.1L5.6 9.7l-1.9 0.7z" fill="#f0b429" stroke="#c98a12" stroke-width="0.4"/><circle cx="10.8" cy="1.4" r="1.1" fill="#e8505b"/></svg>
<svg class="a" style="left:798.00px;top:159.00px;" width="11.4" height="11.4" viewBox="0 0 11.4 11.4"><path d="M0.5 0.5h4.4l2.4 2.4v6h-6.8z" fill="#fff" stroke="#4a525c" stroke-width="0.9"/><path d="M3.4 2.8h4.4l2.6 2.6v5.4h-7z" fill="#fff" stroke="#4a525c" stroke-width="0.9"/><rect x="5" y="6" width="4" height="0.8" fill="#b4bbc3"/><rect x="5" y="8" width="4" height="0.8" fill="#b4bbc3"/></svg>
<svg class="a" style="left:818.40px;top:158.60px;" width="12" height="11.6" viewBox="0 0 12 11.6"><rect x="0.5" y="2" width="7.6" height="9" rx="0.8" fill="#fff" stroke="#cdd3da" stroke-width="0.9"/><rect x="2.6" y="0.6" width="3.4" height="2.4" rx="0.8" fill="#dfe3e8"/><path d="M5.6 5h3.4l2.2 2.2v4h-5.6z" fill="#fff" stroke="#cdd3da" stroke-width="0.9"/></svg>
<svg class="a" style="left:840.10px;top:158.80px;" width="10" height="11.2" viewBox="0 0 10 11.2"><rect x="3.4" y="0" width="3.2" height="1.6" fill="#4a525c"/><rect x="0" y="1.3" width="10" height="1.9" rx="0.6" fill="#4a525c"/><path d="M1.3 3.2h7.4l-0.7 7.6h-6z" fill="#fff" stroke="#4a525c" stroke-width="0.9"/><path d="M3.7 4.4v5.2M6.3 4.4v5.2" stroke="#4a525c" stroke-width="0.7"/></svg>
<svg class="a" style="left:862.90px;top:163.20px;" width="5.4" height="3.6" viewBox="0 0 5.4 3.6"><path d="M0 3.6h5.4L2.7 0z" fill="#4a525c"/></svg>
<svg class="a" style="left:883.30px;top:163.20px;" width="5.6" height="3.6" viewBox="0 0 5.6 3.6"><path d="M0 0h5.6L2.8 3.6z" fill="#b9c0c8"/></svg>
<svg class="a" style="left:954.00px;top:159.20px;" width="11" height="11" viewBox="0 0 11 11"><rect x="0.5" y="0.5" width="10" height="10" fill="#fff" stroke="#8d959f" stroke-width="0.9"/><rect x="0" y="0" width="11" height="2.8" fill="#59626d"/><text x="5.5" y="9" font-size="6.4" fill="#2a7fd3" text-anchor="middle" font-family="Liberation Sans, sans-serif">{x}</text></svg>
<svg class="a" style="left:758.00px;top:544.40px;" width="8.4" height="11.6" viewBox="0 0 8.4 11.6"><path d="M0.5 0.5h4.736000000000001l2.664 2.664v7.936h-7.4z" fill="#fff" stroke="#59626d" stroke-width="0.9"/><path d="M5.236000000000001 0.5v2.664h2.664" fill="none" stroke="#59626d" stroke-width="0.7200000000000001"/></svg>
<svg class="a" style="left:777.20px;top:544.20px;" width="11.6" height="11.6" viewBox="0 0 11.6 11.6"><path d="M3 2.6V0.5h8v8.2h-2.2" fill="#fff" stroke="#59626d" stroke-width="0.9"/><path d="M0.5 4.6l2-2h6.2v8.4h-8.2z" fill="#fff" stroke="#59626d" stroke-width="0.9"/><path d="M2.2 7.4l2 2.2L8 5z" fill="#3aa54a" stroke="#3aa54a" stroke-width="1.2"/></svg>
<svg class="a" style="left:799.00px;top:544.20px;" width="10" height="11.2" viewBox="0 0 10 11.2"><rect x="3.4" y="0" width="3.2" height="1.6" fill="#cdd3da"/><rect x="0" y="1.3" width="10" height="1.9" rx="0.6" fill="#cdd3da"/><path d="M1.3 3.2h7.4l-0.7 7.6h-6z" fill="#f6f8f9" stroke="#cdd3da" stroke-width="0.9"/><path d="M3.7 4.4v5.2M6.3 4.4v5.2" stroke="#cdd3da" stroke-width="0.7"/></svg>
<div class="a" style="left:0.00px;top:568.00px;width:984.00px;height:20.00px;background:#3b3541;"></div>
<div class="a" style="left:0.00px;top:567.00px;width:984.00px;height:1.00px;background:#8f8d96;"></div>
<span class="t" style="left:7.30px;top:575.64px;font-size:8px;color:#c9cdd3;transform:scaleX(0.9767);">Slide 1 of 1</span>
<span class="t" style="left:58.10px;top:575.64px;font-size:8px;color:#c9cdd3;transform:scaleX(0.9363);">"Clean"</span>
<svg class="a" style="left:797.40px;top:573.90px;" width="9.4" height="7.6" viewBox="0 0 9.4 7.6"><rect x="0" y="0" width="4.2" height="3.3" fill="#e8eaed"/><rect x="5.2" y="0" width="4.2" height="3.3" fill="#e8eaed"/><rect x="0" y="4.3" width="4.2" height="3.3" fill="#e8eaed"/><rect x="5.2" y="4.3" width="4.2" height="3.3" fill="#e8eaed"/></svg>
<div class="a" style="left:811.00px;top:571.00px;width:16.70px;height:14.60px;background:#2b2631;"></div>
<svg class="a" style="left:814.50px;top:573.90px;" width="9" height="7.6" viewBox="0 0 9 7.6"><rect x="0" y="0" width="9" height="7.6" fill="#e8eaed"/><rect x="1" y="1" width="3" height="3.6" fill="#2b2631"/><rect x="5" y="1" width="3" height="1.6" fill="#2b2631"/></svg>
<svg class="a" style="left:831.90px;top:573.90px;" width="8.6" height="8" viewBox="0 0 8.6 8"><rect x="0" y="0" width="8.6" height="1.2" fill="#e8eaed"/><rect x="1.2" y="1.2" width="6.2" height="3.6" fill="none" stroke="#e8eaed" stroke-width="0.9"/><path d="M4.3 4.8V6.6M2.2 7.6h4.2" stroke="#e8eaed" stroke-width="1"/></svg>
<span class="t" style="left:847.00px;top:575.24px;font-size:8px;color:#9a9ea7;transform:scaleX(0.8866);">25%</span>
<div class="a" style="left:869.30px;top:577.80px;width:4.80px;height:1.20px;background:#e8eaed;"></div>
<div class="a" style="left:877.30px;top:577.90px;width:69.00px;height:1.00px;background:#e8eaed;"></div>
<svg class="a" style="left:882.40px;top:575.50px;" width="5.8" height="5.8" viewBox="0 0 5.8 5.8"><circle cx="2.9" cy="2.9" r="2.2" fill="#3b3541" stroke="#e8eaed" stroke-width="1.1"/></svg>
<div class="a" style="left:912.00px;top:575.30px;width:1.00px;height:6.20px;background:#e8eaed;"></div>
<div class="a" style="left:949.60px;top:577.80px;width:5.20px;height:1.20px;background:#e8eaed;"></div>
<div class="a" style="left:951.60px;top:575.80px;width:1.20px;height:5.20px;background:#e8eaed;"></div>
<svg class="a" style="left:960.30px;top:573.00px;" width="9.8" height="9.8" viewBox="0 0 9.8 9.8"><rect x="0.5" y="0.5" width="8.8" height="8.8" fill="none" stroke="#e8eaed" stroke-width="1"/><path d="M2 2h2.2L2 4.2z M7.8 2v2.2L5.6 2z M2 7.8v-2.2L4.2 7.8z M7.8 7.8h-2.2L7.8 5.6z" fill="#e8eaed"/><rect x="4.1" y="4.1" width="1.6" height="1.6" fill="#e8eaed"/></svg>
</div>
</div>
</body></html>
